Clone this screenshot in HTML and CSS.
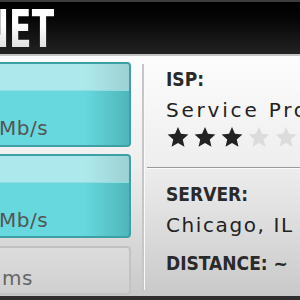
FILE: index.html
```html
<!DOCTYPE html>
<html>
<head>
<meta charset="utf-8">
<link rel="stylesheet" href="styles.css">
</head>
<body>
<header class="top">
  <div class="brand">SPEEDTEST.NET</div>
</header>
<main class="main">
  <section class="results">
    <div class="card card-teal"><div class="hl"></div><div class="val">Mb/s</div></div>
    <div class="card card-teal"><div class="hl"></div><div class="val">Mb/s</div></div>
    <div class="card card-grey"><div class="val">ms</div></div>
  </section>
  <div class="divider"></div>
  <section class="info">
    <div class="block">
      <div class="label">ISP:</div>
      <div class="value isp">Service Provider</div>
      <div class="stars">
        <svg class="star on" viewBox="1 1.5 22 21"><path d="M12 1.5l3.1 7.2 7.8.7-5.9 5.2 1.8 7.7L12 18.2l-6.8 4.1 1.8-7.7-5.9-5.2 7.8-.7z"/></svg>
        <svg class="star on" viewBox="1 1.5 22 21"><path d="M12 1.5l3.1 7.2 7.8.7-5.9 5.2 1.8 7.7L12 18.2l-6.8 4.1 1.8-7.7-5.9-5.2 7.8-.7z"/></svg>
        <svg class="star on" viewBox="1 1.5 22 21"><path d="M12 1.5l3.1 7.2 7.8.7-5.9 5.2 1.8 7.7L12 18.2l-6.8 4.1 1.8-7.7-5.9-5.2 7.8-.7z"/></svg>
        <svg class="star off" viewBox="1 1.5 22 21"><path d="M12 1.5l3.1 7.2 7.8.7-5.9 5.2 1.8 7.7L12 18.2l-6.8 4.1 1.8-7.7-5.9-5.2 7.8-.7z"/></svg>
        <svg class="star off" viewBox="1 1.5 22 21"><path d="M12 1.5l3.1 7.2 7.8.7-5.9 5.2 1.8 7.7L12 18.2l-6.8 4.1 1.8-7.7-5.9-5.2 7.8-.7z"/></svg>
      </div>
    </div>
    <div class="hr"></div>
    <div class="block block2">
      <div class="label">SERVER:</div>
      <div class="value">Chicago, IL</div>
      <div class="label dist">DISTANCE: ~</div>
    </div>
  </section>
</main>
<footer class="foot"></footer>
</body>
</html>
```

FILE: styles.css
```css
html, body {
  margin: 0;
  padding: 0;
}
body {
  width: 300px;
  height: 300px;
  overflow: hidden;
  font-family: "DejaVu Sans", sans-serif;
  display: flex;
  flex-direction: column;
}
.top {
  height: 52px;
  border-top: 2px solid #3c3c3c;
  border-bottom: 2px solid #c4c4c4;
  background: linear-gradient(#000 0%, #050505 30%, #222 100%);
  overflow: hidden;
  position: relative;
}
.brand {
  position: absolute;
  right: 246px;
  top: 1px;
  font-family: "DejaVu Sans Condensed", "DejaVu Sans", sans-serif;
  font-weight: bold;
  font-size: 51px;
  line-height: 54px;
  white-space: nowrap;
  letter-spacing: 0;
  transform: scaleX(0.72);
  transform-origin: right center;
  background: linear-gradient(#fff 40%, #d2d2d2 100%);
  -webkit-background-clip: text;
  background-clip: text;
  -webkit-text-fill-color: transparent;
}
.main {
  height: 240px;
  display: flex;
  background: linear-gradient(#fdfdfd 0%, #eeeeee 45%, #c9c9c9 100%);
}
.results {
  margin-left: -12px;
  width: 143px;
  padding-top: 6px;
  display: flex;
  flex-direction: column;
  gap: 7px;
}
.card {
  border-radius: 4px;
  box-sizing: border-box;
  position: relative;
  overflow: hidden;
}
.card-teal {
  height: 85px;
  border: 2px solid #3e9fa4;
  background: linear-gradient(90deg, #66d8de 0%, #66d8de 68%, #4fb6bb 100%);
}
.card-teal + .card-teal {
  height: 84px;
}
.card-teal .hl {
  height: 26px;
  background: linear-gradient(90deg, #ade9ec 0%, #ade9ec 68%, #9ed1d4 100%);
  border-bottom: 1px solid #8fdde2;
}
.card-grey {
  height: 49px;
  margin-top: 1px;
  border: 2px solid #c2c2c2;
  background: linear-gradient(#dcdcdc, #d0d0d0);
}
.val {
  padding-left: 9px;
  font-size: 20px;
  color: #555;
  letter-spacing: 0.5px;
  line-height: 24px;
  margin-top: 25px;
}
.card-grey .val {
  margin-top: 18px;
  padding-left: 12px;
  color: #666;
}
.divider {
  width: 2px;
  margin-left: 11px;
  margin-top: 8px;
  margin-bottom: 6px;
  background: #c6c6c6;
  border-right: 1px solid #fafafa;
}
.info {
  flex: 1;
  display: flex;
  flex-direction: column;
  overflow: hidden;
  white-space: nowrap;
}
.block {
  padding-left: 21px;
}
.label {
  font-family: "DejaVu Sans Condensed", "DejaVu Sans", sans-serif;
  font-weight: bold;
  font-size: 19px;
  color: #2a2a2a;
  line-height: 22px;
  margin-top: 12px;
}
.value {
  font-size: 20px;
  color: #222;
  letter-spacing: 1.6px;
  line-height: 24px;
  margin-top: 8px;
}
.value.isp {
  letter-spacing: 2.8px;
}
.stars {
  display: flex;
  gap: 5px;
  margin-top: 5px;
  margin-left: 1px;
}
.star {
  width: 22px;
  height: 20px;
  display: block;
}
.star.on { fill: #222; }
.star.off { fill: #dcdcdc; }
.hr {
  margin-top: 20px;
  margin-left: 2px;
  height: 1px;
  background: #9a9a9a;
  border-bottom: 1px solid #fafafa;
}
.block2 .label {
  margin-top: 14px;
}
.block2 .value {
  margin-top: 8px;
}
.block2 .dist {
  margin-top: 15px;
}
.foot {
  height: 4px;
  background: #2e2e2e;
}
```
